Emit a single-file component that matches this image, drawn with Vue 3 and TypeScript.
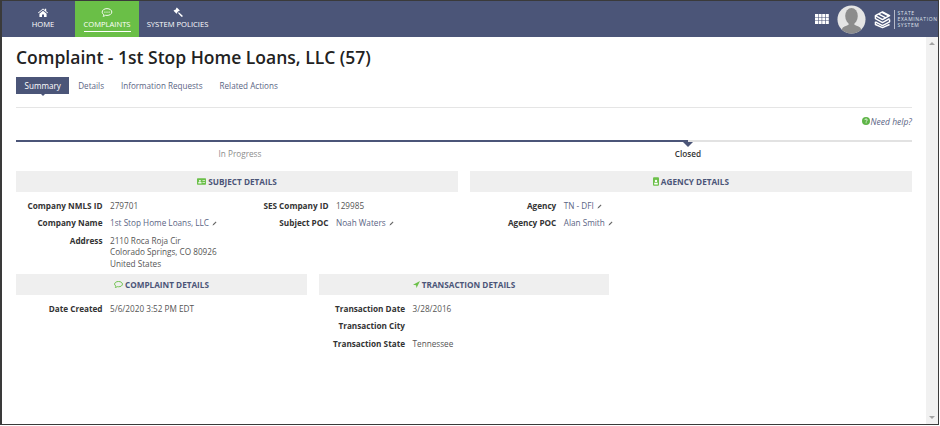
<script setup lang="ts">
interface Field { label: string; lines: string[]; link?: boolean; edit?: boolean }
interface Nav { label: string; active?: boolean; icon: string }

const navs: Nav[] = [
  { label: 'HOME', icon: 'home' },
  { label: 'COMPLAINTS', active: true, icon: 'comment' },
  { label: 'SYSTEM POLICIES', icon: 'gavel' },
]
const tabs = ['Summary', 'Details', 'Information Requests', 'Related Actions']
const subjectA: Field[] = [
  { label: 'Company NMLS ID', lines: ['279701'] },
  { label: 'Company Name', lines: ['1st Stop Home Loans, LLC'], link: true, edit: true },
  { label: 'Address', lines: ['2110 Roca Roja Cir', 'Colorado Springs, CO 80926', 'United States'] },
]
const subjectB: Field[] = [
  { label: 'SES Company ID', lines: ['129985'] },
  { label: 'Subject POC', lines: ['Noah Waters'], link: true, edit: true },
]
const agency: Field[] = [
  { label: 'Agency', lines: ['TN - DFI'], link: true, edit: true },
  { label: 'Agency POC', lines: ['Alan Smith'], link: true, edit: true },
]
const complaint: Field[] = [{ label: 'Date Created', lines: ['5/6/2020 3:52 PM EDT'] }]
const transaction: Field[] = [
  { label: 'Transaction Date', lines: ['3/28/2016'] },
  { label: 'Transaction City', lines: [''] },
  { label: 'Transaction State', lines: ['Tennessee'] },
]
const columnsTop = [subjectA, subjectB]
</script>

<template>
  <div class="frame">
    <header class="topbar">
      <nav class="nav">
        <a v-for="n in navs" :key="n.label" class="nav-item" :class="{ active: n.active }">
          <svg v-if="n.icon === 'home'" class="nav-icon" viewBox="0 0 24 24" width="12" height="11">
            <path fill="#fff" d="M12 3 1 12.400l1.300 1.500L12 5.600l9.700 8.300 1.300-1.500-4-3.400V3.800h-3v2.600zM4.200 14.600V22h5.600v-5.600h4.400V22h5.600v-7.400L12 8z" />
          </svg>
          <svg v-else-if="n.icon === 'comment'" class="nav-icon" viewBox="0 0 24 24" width="12" height="11">
            <path fill="none" stroke="#fff" stroke-width="2" d="M12 3.500C6 3.500 1.500 6.800 1.500 11c0 2.400 1.500 4.500 3.900 5.900-.3 1.300-1 2.500-1.900 3.400 2-.3 3.800-1.100 5.200-2.200 1 .2 2.100.3 3.300.3 6 0 10.500-3.300 10.500-7.400S18 3.500 12 3.500z" />
            <circle cx="7.500" cy="11" r="1.400" fill="#fff" /><circle cx="12" cy="11" r="1.400" fill="#fff" /><circle cx="16.500" cy="11" r="1.400" fill="#fff" />
          </svg>
          <svg v-else class="nav-icon" viewBox="0 0 24 24" width="12" height="11">
            <path fill="#fff" d="M9.500 1 16 7.500l-2 2-.8-.8-3.200 3.200.8.800-2 2L2.300 8.200l2-2 .8.800L8.300 3.800l-.8-.8zM12 13l1.800-1.800 8 7.300c.7.700.7 1.800 0 2.500s-1.800.7-2.500 0z" />
          </svg>
          <span class="nav-label">{{ n.label }}</span>
        </a>
      </nav>
      <div class="top-right">
        <svg class="apps" viewBox="0 0 14 10" width="14" height="10">
          <g fill="#fff">
            <rect v-for="c in 12" :key="c" :x="((c - 1) % 4) * 3.600" :y="Math.floor((c - 1) / 4) * 3.500" width="3" height="3" />
          </g>
        </svg>
        <svg class="avatar" viewBox="0 0 30 30" width="29" height="29">
          <defs><clipPath id="av"><circle cx="15" cy="15" r="14.500" /></clipPath></defs>
          <circle cx="15" cy="15" r="14.500" fill="#e4e4e4" />
          <g clip-path="url(#av)" fill="#8c8c8c">
            <ellipse cx="15" cy="11.500" rx="6.500" ry="8.500" />
            <path d="M12 17h6v3.500c3 1.500 6 2 7 4.500v5H5v-5c1-2.500 4-3 7-4.500z" />
          </g>
        </svg>
        <div class="brand">
          <svg class="brand-mark" viewBox="0 0 18 19" width="17" height="19">
            <g fill="none" stroke="#fff" stroke-width="1.500" stroke-linejoin="round">
              <path d="M1.500 5.500 9 1.500l7.500 4L9 9.500z" />
              <path d="M5 3.700l7.500 4M8.500 2l7.500 4" />
              <path d="M1.500 5.500v3.200L9 12.700l7.500-4" />
              <path d="M16.500 9.500v2.500L9 16l-7.500-4" />
              <path d="M1.500 12v2.800L9 18l7.500-3.200" />
            </g>
          </svg>
          <span class="brand-rule"></span>
          <span class="brand-text">STATE<br />EXAMINATION<br />SYSTEM</span>
        </div>
      </div>
    </header>

    <div class="below">
      <main class="content">
        <h1 class="title">Complaint - 1st Stop Home Loans, LLC (57)</h1>
        <ul class="tabs">
          <li v-for="(t, i) in tabs" :key="t" class="tab" :class="{ current: i === 0 }">{{ t }}</li>
        </ul>
        <div class="help">
          <svg viewBox="0 0 12 12" width="8" height="8">
            <circle cx="6" cy="6" r="6" fill="#5fb548" />
            <path d="M4.200 4.600c0-1 .8-1.700 1.900-1.700s1.800.7 1.800 1.600c0 1.400-1.600 1.300-1.600 2.500" fill="none" stroke="#fff" stroke-width="1.200" />
            <rect x="5.500" y="8" width="1.300" height="1.300" fill="#fff" />
          </svg>
          <em>Need help?</em>
        </div>
        <div class="steps">
          <div class="step done">In Progress</div>
          <div class="step now">Closed</div>
        </div>

        <div class="row halves">
          <section>
            <h2 class="sec">
              <svg viewBox="0 0 14 10" width="9" height="7"><rect width="14" height="10" rx="1" fill="#6cc04a" /><circle cx="4.500" cy="4" r="1.500" fill="#fff" /><rect x="2" y="6" width="5" height="2" fill="#fff" /><rect x="8.500" y="3" width="4" height="1" fill="#fff" /><rect x="8.500" y="6" width="4" height="1" fill="#fff" /></svg>
              SUBJECT DETAILS
            </h2>
            <div class="two">
              <div v-for="(col, ci) in columnsTop" :key="ci" class="fields">
                <div v-for="f in col" :key="f.label" class="field">
                  <span class="label">{{ f.label }}</span>
                  <span class="value" :class="{ link: f.link }">
                    <span v-for="l in f.lines" :key="l" class="line">{{ l }}<svg v-if="f.edit" class="pen" viewBox="0 0 10 10" width="5" height="5"><path d="M1 9l1.200-2.800L7.500 1 9 2.500 3.800 7.800z" fill="#666" /></svg></span>
                  </span>
                </div>
              </div>
            </div>
          </section>
          <section>
            <h2 class="sec">
              <svg viewBox="0 0 10 14" width="6" height="9"><rect width="10" height="14" rx="1.500" fill="#6cc04a" /><circle cx="5" cy="6" r="2" fill="#fff" /><rect x="2" y="9" width="6" height="3" fill="#fff" /></svg>
              AGENCY DETAILS
            </h2>
            <div class="fields">
              <div v-for="f in agency" :key="f.label" class="field">
                <span class="label">{{ f.label }}</span>
                <span class="value link"><span class="line">{{ f.lines[0] }}<svg class="pen" viewBox="0 0 10 10" width="5" height="5"><path d="M1 9l1.200-2.800L7.500 1 9 2.500 3.800 7.800z" fill="#666" /></svg></span></span>
              </div>
            </div>
          </section>
        </div>

        <div class="row thirds">
          <section>
            <h2 class="sec">
              <svg viewBox="0 0 24 24" width="9" height="9"><path fill="none" stroke="#6cc04a" stroke-width="2.600" d="M12 4C6 4 1.500 7 1.500 11c0 2.300 1.500 4.300 3.900 5.600-.3 1.200-1 2.400-1.900 3.400 2-.3 3.800-1.100 5.200-2.200 1 .2 2.100.3 3.300.3 6 0 10.500-3.100 10.500-7.100S18 4 12 4z" /></svg>
              COMPLAINT DETAILS
            </h2>
            <div class="fields">
              <div v-for="f in complaint" :key="f.label" class="field">
                <span class="label">{{ f.label }}</span>
                <span class="value"><span class="line">{{ f.lines[0] }}</span></span>
              </div>
            </div>
          </section>
          <section>
            <h2 class="sec">
              <svg viewBox="0 0 12 12" width="7" height="7"><path fill="#6cc04a" d="M12 0 0 6.500l5.200.6L6 12z" /></svg>
              TRANSACTION DETAILS
            </h2>
            <div class="fields">
              <div v-for="f in transaction" :key="f.label" class="field">
                <span class="label">{{ f.label }}</span>
                <span class="value"><span class="line">{{ f.lines[0] }}</span></span>
              </div>
            </div>
          </section>
        </div>
      </main>
      <aside class="scroll">
        <span class="arrow up"></span>
        <span class="arrow down"></span>
      </aside>
    </div>
  </div>
</template>

<style>
html, body { margin: 0; background: #fff; }
</style>

<style scoped>
.frame {
  box-sizing: border-box;
  width: 939px;
  height: 425px;
  border: solid #3a3a3a;
  border-width: 1.500px 1.500px 1.500px 2px;
  display: flex;
  flex-direction: column;
  font-family: "Open Sans", sans-serif;
  overflow: hidden;
  background: #fff;
}
.topbar {
  height: 36px;
  flex: none;
  background: #4b5578;
  display: flex;
  justify-content: space-between;
}
.nav { display: flex; margin-left: 14px; }
.nav-item {
  width: 54px;
  margin-right: 5px;
  color: #fff;
  font-size: 7.600px;
  display: flex;
  flex-direction: column;
  align-items: center;
  padding-top: 6px;
  box-sizing: border-box;
  white-space: nowrap;
}
.nav-item:nth-child(2) { width: 64px; margin: 0; background: #6abf47; }
.nav-item:nth-child(3) { width: 71px; margin-left: 3px; }
.nav-icon { display: block; }
.nav-label { margin-top: 1px; line-height: 11px; }
.active .nav-label { border-bottom: 1px solid #fff; padding: 0 0 1px; width: 47px; text-align: center; }
.top-right { display: flex; align-items: center; }
.apps { margin-right: 8px; }
.avatar { margin-right: 8px; }
.brand { display: flex; align-items: center; margin-right: 7.500px; width: 57px; }
.brand-mark { flex: none; }
.brand-rule { width: 1px; height: 19px; background: rgba(255,255,255,.6); margin: 0 3px; flex: none; }
.brand-text { color: #dfe2ea; font-size: 5px; line-height: 6px; letter-spacing: .6px; white-space: nowrap; }

.below { flex: 1; display: flex; min-height: 0; }
.content { flex: 1; padding: 0 14px; min-width: 0; }
.title {
  margin: 0;
  padding-top: 7px;
  font-size: 17.500px;
  line-height: 26px;
  font-weight: 600;
  color: #222;
  white-space: nowrap;
}
.tabs {
  list-style: none;
  margin: 7px 0 0;
  padding: 0 0 13px;
  display: flex;
  border-bottom: 1px solid #e5e5e5;
  gap: 17px;
  font-size: 8.100px;
  color: #5a6484;
}
.tab { line-height: 17px; position: relative; }
.tab.current { background: #4b5578; color: #fff; padding: 0 8.500px; margin-right: -8px; }
.tab.current::after {
  content: "";
  position: absolute;
  left: 50%;
  top: 100%;
  margin-left: -2px;
  border: 2.500px solid transparent;
  border-bottom-width: 0;
  border-top-color: #4b5578;
}
.help {
  display: flex;
  justify-content: flex-end;
  align-items: center;
  gap: 1px;
  margin-top: 7px;
  height: 12px;
  font-size: 8.500px;
  color: #5a6484;
}
.steps { display: flex; margin-top: 13px; }
.step {
  flex: 1;
  border-top: 2.500px solid #e2e2e2;
  text-align: center;
  font-size: 8.200px;
  line-height: 12px;
  padding-top: 6px;
  position: relative;
  color: #8c8c8c;
}
.step.done { border-top-color: #4b5578; }
.step.now { color: #333; font-weight: 600; }
.step.now::before {
  content: "";
  position: absolute;
  top: -2.500px;
  left: 0;
  width: 50%;
  height: 2.500px;
  background: #4b5578;
}
.step.now::after {
  content: "";
  position: absolute;
  top: 0;
  left: 50%;
  margin-left: -5px;
  border: 5px solid transparent;
  border-bottom-width: 0;
  border-top-color: #4b5578;
}
.row { display: grid; gap: 11.600px; }
.halves { grid-template-columns: 1fr 1fr; margin-top: 11px; height: 103px; }
.thirds { grid-template-columns: repeat(3, 1fr); }
.sec {
  margin: 0;
  height: 21px;
  background: #efefef;
  display: flex;
  justify-content: center;
  align-items: center;
  gap: 2px;
  font-size: 8.200px;
  font-weight: 700;
  color: #4b5578;
  white-space: nowrap;
}
.two { display: grid; grid-template-columns: 226px 1fr; }
.fields { padding-top: 8px; }
.field { display: flex; font-size: 8.200px; line-height: 11.400px; margin-bottom: 6px; }
.label { width: 86.500px; flex: none; text-align: right; font-weight: 700; color: #333; white-space: nowrap; margin-right: 7.500px; }
.value { color: #555; white-space: nowrap; }
.value.link { color: #5a6484; }
.line { display: block; min-height: 11.400px; }
.pen { margin-left: 3px; }
.scroll {
  width: 12px;
  flex: none;
  background: #f1f1f1;
  display: flex;
  flex-direction: column;
  justify-content: space-between;
  align-items: center;
  padding: 5px 0;
}
.arrow { width: 0; height: 0; border: 3px solid transparent; }
.arrow.up { border-top-width: 0; border-bottom-color: #a3a3a3; }
.arrow.down { border-bottom-width: 0; border-top-color: #a3a3a3; }
</style>
